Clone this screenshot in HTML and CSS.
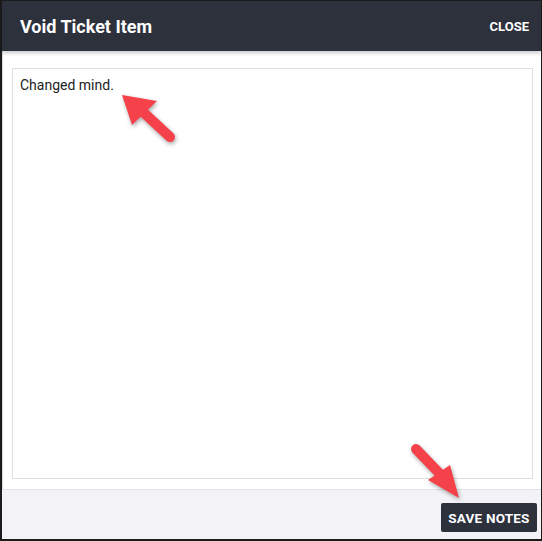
FILE: index.html
```html
<!DOCTYPE html>
<html>
<head>
<meta charset="utf-8">
<link rel="stylesheet" href="styles.css">
</head>
<body>
<div class="frame">
  <div class="header">
    <div class="title">Void Ticket Item</div>
    <div class="close">CLOSE</div>
  </div>
  <div class="content">
    <div class="notes">Changed mind.</div>
  </div>
  <div class="footer">
    <button class="save">SAVE NOTES</button>
  </div>
  <svg class="arrows" width="542" height="541" viewBox="0 0 542 541">
    <g class="arrow">
      <line x1="170" y1="137" x2="143" y2="112" stroke="#f5424a" stroke-width="10" stroke-linecap="round"/>
      <polygon points="122,95 157,101 132,125" fill="#f5424a"/>
    </g>
    <g class="arrow">
      <line x1="416" y1="449" x2="440" y2="474" stroke="#f5424a" stroke-width="10" stroke-linecap="round"/>
      <polygon points="459,498 450,465 428,480" fill="#f5424a"/>
    </g>
  </svg>
</div>
</body>
</html>
```
FILE: styles.css
```css
html, body {
  margin: 0;
  padding: 0;
  background: #ffffff;
}
.frame {
  position: relative;
  width: 542px;
  height: 541px;
  box-sizing: border-box;
  border: 1px solid #1b1b1b;
  border-left-width: 2px;
  border-bottom-width: 2px;
  display: flex;
  flex-direction: column;
  font-family: Roboto, "Liberation Sans", sans-serif;
  background: #ffffff;
}
.header {
  height: 50px;
  flex: none;
  background: #2c313c;
  display: flex;
  align-items: center;
  justify-content: space-between;
  padding: 0 12px 0 18px;
  box-shadow: 0 2px 4px rgba(0, 0, 0, 0.22);
  position: relative;
  z-index: 1;
}
.title {
  color: #ffffff;
  font-size: 18px;
  font-weight: 700;
}
.close {
  color: #ffffff;
  font-size: 13px;
  font-weight: 700;
}
.content {
  flex: 1;
  padding: 17px 8px 10px 9px;
  display: flex;
  border-left: 1px solid #d8d8d8;
}
.notes {
  flex: 1;
  border: 1px solid #dedede;
  padding: 8px 7px;
  font-size: 14px;
  color: #222222;
}
.footer {
  height: 50px;
  flex: none;
  box-sizing: border-box;
  background: #f3f3f7;
  border-top: 1px solid #e2e2e6;
  display: flex;
  justify-content: flex-end;
  align-items: flex-end;
  padding: 0 4px 7px 0;
}
.save {
  height: 29px;
  width: 96px;
  padding: 0;
  border: none;
  border-radius: 2px;
  background: #2c313c;
  color: #ffffff;
  font-family: Roboto, "Liberation Sans", sans-serif;
  font-size: 13.5px;
  font-weight: 700;
  letter-spacing: 0.2px;
}
.arrows {
  position: absolute;
  left: -2px;
  top: -1px;
  pointer-events: none;
  z-index: 5;
}
.arrow {
  filter: drop-shadow(1px 2px 2px rgba(0, 0, 0, 0.35));
}
```
